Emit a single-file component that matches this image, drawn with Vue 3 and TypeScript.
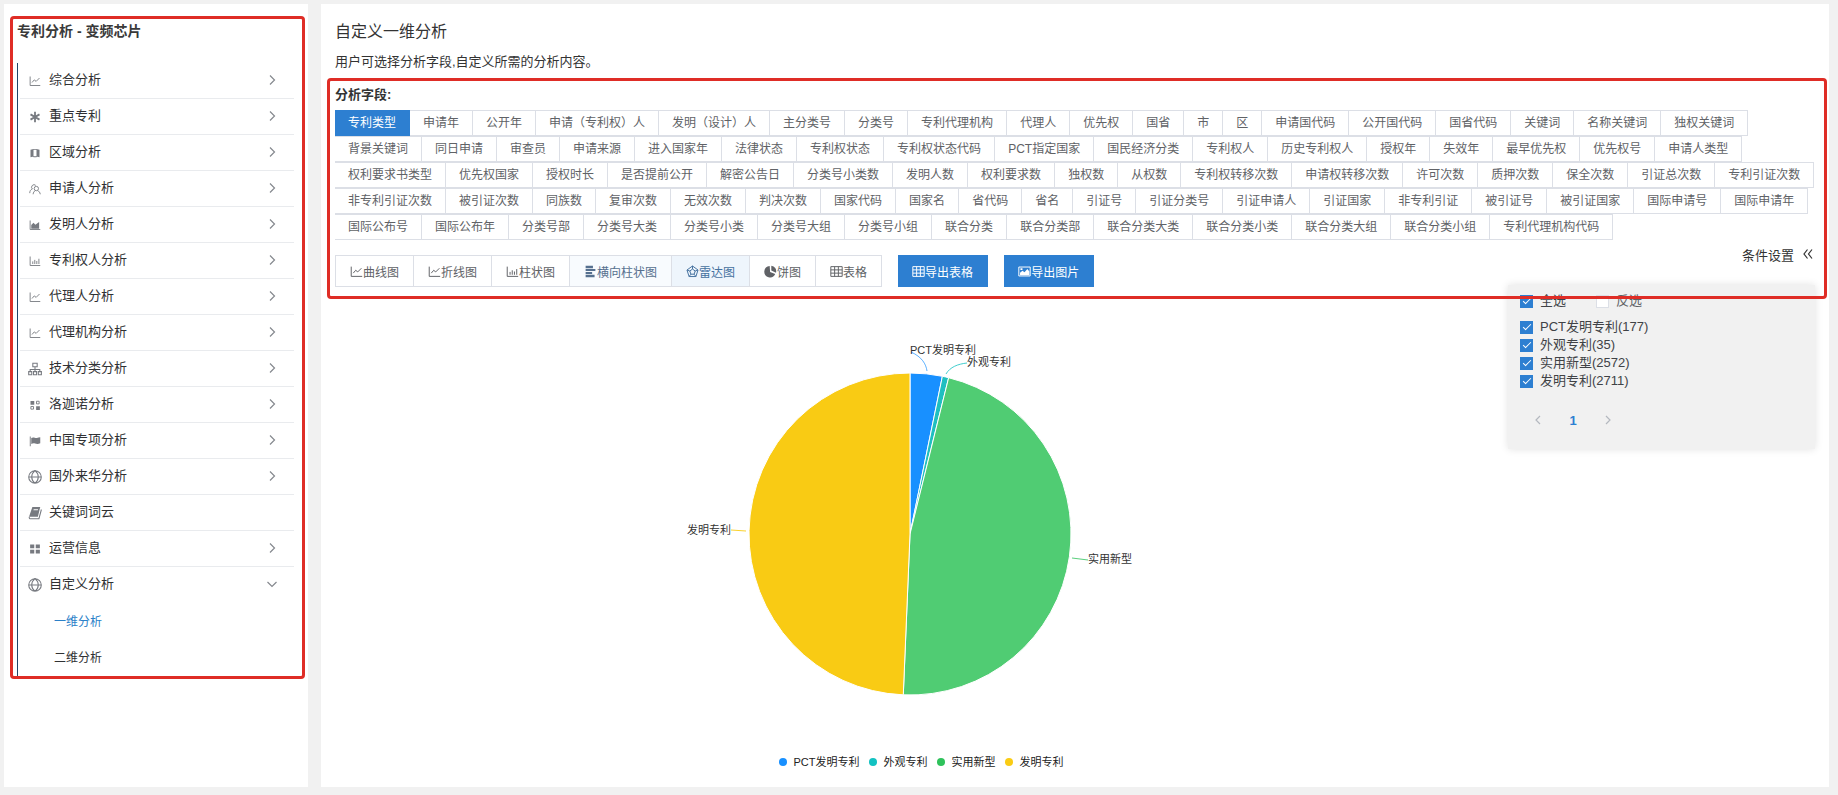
<script setup lang="ts">
import { computed, ref } from 'vue'

interface Glyph { line?: string; fill?: string }
interface MenuItem { label: string; icon: string; arrow: 'right' | 'down' | 'none' }
interface Slice { name: string; value: number; color: string; dot: string }

const glyphs: Record<string, Glyph> = {
  line: { line: 'M1.5 2v12H15M4 10l3-3.5 2.5 2L14 4' },
  star: { line: 'M8 1v14M2 4.5l12 7M14 4.5l-12 7' },
  map: { fill: 'M2 3.5l4-1v10l-4 1zM6 2.5h4v1.2H6zM6 12.300h4v1.2H6zM10 2.500l4 1v10l-4-1z' },
  people: { line: 'M4.500 8A3.200 3.200 0 1 1 9 3.200M1 13.500c0-3 1.200-4.600 3.500-5.500M9.800 4.500a2.900 2.900 0 1 1 0 5.800a2.900 2.900 0 1 1 0-5.800M5.500 15c.2-2.400 1.200-3.800 2.800-4.900M11.500 10.200c2 .8 3.200 2.400 3.500 4.800' },
  area: { line: 'M1.500 2v12H15', fill: 'M3 13V8l3-3 2.500 2.500L13.500 4v9z' },
  bars: { line: 'M1.500 2v12H15M5 12V8.500M7.700 12V6.500M10.400 12V8M13.200 12V5' },
  tree: { line: 'M5.500 1.500h5v4h-5zM8 5.500v3M2.500 11V8.500h11V11M8 8.500V11M.8 11h3.500v3.500H.8zM6.300 11h3.500v3.500H6.300zM11.800 11h3.500v3.500h-3.500z' },
  blocks: { line: 'M10 3h3.500v3.500H10zM2.500 10H6v3.500H2.500z', fill: 'M2 2.500h5v5H2zM9.500 9.500h5v5h-5z' },
  flag: { line: 'M1.700 2v13', fill: 'M3 4c3-2 5 .5 7.500 0 1.500-.2 3-.8 4.500-1v8c-3 1.500-5 1-7 .3-2-.7-3.500 0-5 .7z' },
  globe: { line: 'M8 .8a7.200 7.200 0 1 1 0 14.400a7.200 7.200 0 1 1 0-14.400M.8 8h14.400M8 .8c-5 4-5 10.400 0 14.400M8 .8c5 4 5 10.400 0 14.400' },
  book: { line: 'M1.500 12.500c-.5 1.500.5 2 1.500 2h9.500L15.300 4', fill: 'M5 1h9L11.300 12.300H1.200zM6.500 3.700l-.3 1.200h5l.3-1.200z' },
  grid: { fill: 'M1.500 2h5.500v5H1.500zM9 2h5.500v5H9zM1.500 9h5.500v5H1.500zM9 9h5.500v5H9z' },
  hbars: { fill: 'M2 1h9v3H2zM2 5h12v2.500H2zM2 8.500h8v2.500H2zM2 12h11v3H2z' },
  radar: { line: 'M8 1.200l6.800 5-2.600 8H3.800l-2.600-8zM8 5l3.300 2.400-1.300 3.900H6L4.700 7.400zM8 1.200V5M14.800 6.200l-3.500 1.200M12.200 14.200L10 11.300M3.800 14.200L6 11.300M1.200 6.200l3.500 1.200' },
  pie: { fill: 'M7 1.200A7 7 0 1 0 13.800 11L7.500 8.500zM9 .9v6l5.800 2.500A6.800 6.800 0 0 0 9 .9z' },
  table: { line: 'M1 2h14v12H1zM1 6h14M1 10h14M5.700 2v12M10.300 2v12' },
  image: { line: 'M1 2.500h14v11H1z', fill: 'M2.500 12.500V9.500l3-2.500 2.500 2 3.500-4 2.500 3v4.500zM3 4h2.500v2H3z' },
}
const bigIcons = ['globe', 'tree', 'book']

const menu: MenuItem[] = [
  { label: '综合分析', icon: 'line', arrow: 'right' },
  { label: '重点专利', icon: 'star', arrow: 'right' },
  { label: '区域分析', icon: 'map', arrow: 'right' },
  { label: '申请人分析', icon: 'people', arrow: 'right' },
  { label: '发明人分析', icon: 'area', arrow: 'right' },
  { label: '专利权人分析', icon: 'bars', arrow: 'right' },
  { label: '代理人分析', icon: 'line', arrow: 'right' },
  { label: '代理机构分析', icon: 'line', arrow: 'right' },
  { label: '技术分类分析', icon: 'tree', arrow: 'right' },
  { label: '洛迦诺分析', icon: 'blocks', arrow: 'right' },
  { label: '中国专项分析', icon: 'flag', arrow: 'right' },
  { label: '国外来华分析', icon: 'globe', arrow: 'right' },
  { label: '关键词词云', icon: 'book', arrow: 'none' },
  { label: '运营信息', icon: 'grid', arrow: 'right' },
  { label: '自定义分析', icon: 'globe', arrow: 'down' },
]
const subMenu = ['一维分析', '二维分析']

const fieldRows: string[][] = [
  '专利类型 申请年 公开年 申请（专利权）人 发明（设计）人 主分类号 分类号 专利代理机构 代理人 优先权 国省 市 区 申请国代码 公开国代码 国省代码 关键词 名称关键词 独权关键词',
  '背景关键词 同日申请 审查员 申请来源 进入国家年 法律状态 专利权状态 专利权状态代码 PCT指定国家 国民经济分类 专利权人 历史专利权人 授权年 失效年 最早优先权 优先权号 申请人类型',
  '权利要求书类型 优先权国家 授权时长 是否提前公开 解密公告日 分类号小类数 发明人数 权利要求数 独权数 从权数 专利权转移次数 申请权转移次数 许可次数 质押次数 保全次数 引证总次数 专利引证次数',
  '非专利引证次数 被引证次数 同族数 复审次数 无效次数 判决次数 国家代码 国家名 省代码 省名 引证号 引证分类号 引证申请人 引证国家 非专利引证 被引证号 被引证国家 国际申请号 国际申请年',
  '国际公布号 国际公布年 分类号部 分类号大类 分类号小类 分类号大组 分类号小组 联合分类 联合分类部 联合分类大类 联合分类小类 联合分类大组 联合分类小组 专利代理机构代码',
].map((row) => row.split(' '))
const activeField = ref('专利类型')

const chartTypes = [
  { label: '曲线图', icon: 'line' },
  { label: '折线图', icon: 'line' },
  { label: '柱状图', icon: 'bars' },
  { label: '横向柱状图', icon: 'hbars', tone: 'soft' },
  { label: '雷达图', icon: 'radar', tone: 'hover' },
  { label: '饼图', icon: 'pie' },
  { label: '表格', icon: 'table' },
]
const exportsList = [
  { label: '导出表格', icon: 'table' },
  { label: '导出图片', icon: 'image' },
]

const slices: Slice[] = [
  { name: 'PCT发明专利', value: 177, color: '#1890ff', dot: '#1890ff' },
  { name: '外观专利', value: 35, color: '#1fbfc0', dot: '#13c2c2' },
  { name: '实用新型', value: 2572, color: '#50cc73', dot: '#2fc25b' },
  { name: '发明专利', value: 2711, color: '#f9cb14', dot: '#facc14' },
]
const checked = ref(slices.map((s) => s.name))

const arcs = computed(() => {
  const total = slices.reduce((sum, s) => sum + s.value, 0)
  const point = (a: number) => `${250 + 161 * Math.sin(a)} ${214 - 161 * Math.cos(a)}`
  let angle = 0
  return slices.map((s) => {
    const from = angle
    angle += (s.value / total) * Math.PI * 2
    const large = angle - from > Math.PI ? 1 : 0
    return { color: s.color, d: `M250 214L${point(from)}A161 161 0 ${large} 1 ${point(angle)}Z` }
  })
})
</script>

<template>
  <div class="page">
    <aside class="panel sidebar">
      <div class="marked">
        <h2 class="side-title">专利分析 - 变频芯片</h2>
        <nav class="menu">
          <a v-for="item in menu" :key="item.label" href="#" class="menu-item">
            <svg class="icon" viewBox="0 0 16 16" :class="{ big: bigIcons.includes(item.icon) }">
              <path v-if="glyphs[item.icon].line" class="ln" :class="{ heavy: item.icon === 'star' }" :d="glyphs[item.icon].line" />
              <path v-if="glyphs[item.icon].fill" class="fl" :d="glyphs[item.icon].fill" />
            </svg>
            <span class="menu-label">{{ item.label }}</span>
            <svg v-if="item.arrow !== 'none'" class="chevron" viewBox="0 0 10 10">
              <path class="ln" :d="item.arrow === 'right' ? 'M3 .5L7.500 5 3 9.500' : 'M.5 3L5 7.500 9.500 3'" />
            </svg>
          </a>
          <div class="sub-menu">
            <a v-for="(sub, i) in subMenu" :key="sub" href="#" class="sub-item" :class="{ current: i === 0 }">{{ sub }}</a>
          </div>
        </nav>
      </div>
    </aside>

    <main class="panel content">
      <h1 class="title">自定义一维分析</h1>
      <p class="desc">用户可选择分析字段,自定义所需的分析内容。</p>
      <section class="filters">
        <h3 class="caption">分析字段:</h3>
        <div v-for="(row, r) in fieldRows" :key="r" class="field-row">
          <button
            v-for="field in row"
            :key="field"
            type="button"
            class="field"
            :class="{ active: field === activeField }"
            @click="activeField = field"
          >{{ field }}</button>
        </div>
        <div class="toolbar">
          <div class="types">
            <button v-for="t in chartTypes" :key="t.label" type="button" class="type" :class="t.tone">
              <svg class="icon" viewBox="0 0 16 16">
                <path v-if="glyphs[t.icon].line" class="ln" :d="glyphs[t.icon].line" />
                <path v-if="glyphs[t.icon].fill" class="fl" :d="glyphs[t.icon].fill" />
              </svg>{{ t.label }}
            </button>
          </div>
          <button v-for="e in exportsList" :key="e.label" type="button" class="export">
            <svg class="icon" viewBox="0 0 16 16">
              <path v-if="glyphs[e.icon].line" class="ln" :d="glyphs[e.icon].line" />
              <path v-if="glyphs[e.icon].fill" class="fl" :d="glyphs[e.icon].fill" />
            </svg>{{ e.label }}
          </button>
          <button type="button" class="settings">
            条件设置
            <svg class="double" viewBox="0 0 10 10"><path class="ln" d="M4.500 .5L1 5l3.500 4.500M9 .5L5.500 5 9 9.500" /></svg>
          </button>
          <div class="popup">
            <div class="check-head">
              <label class="check"><input type="checkbox" checked />全选</label>
              <label class="check invert"><input type="checkbox" />反选</label>
            </div>
            <label v-for="s in slices" :key="s.name" class="check item">
              <input v-model="checked" type="checkbox" :value="s.name" />{{ s.name }}({{ s.value }})
            </label>
            <div class="pager">
              <button type="button" aria-label="上一页" disabled>
                <svg viewBox="0 0 10 10"><path class="ln" d="M7 1L3 5l4 4" /></svg>
              </button>
              <button type="button" class="num">1</button>
              <button type="button" aria-label="下一页" disabled>
                <svg viewBox="0 0 10 10"><path class="ln" d="M3 1l4 4-4 4" /></svg>
              </button>
            </div>
          </div>
        </div>
      </section>

      <figure class="chart">
        <svg class="pie" viewBox="0 0 500 400" width="500" height="400">
          <path v-for="a in arcs" :key="a.color" class="slice" :d="a.d" :fill="a.color" />
          <g fill="none">
            <path d="M251 32C262 37 266 44 267 51" stroke="#1890ff" stroke-opacity=".7" />
            <path d="M286 54C290 47 298 44 307 43" stroke="#13c2c2" stroke-opacity=".8" />
            <path d="M412 238L428 240" stroke="#2fc25b" stroke-opacity=".8" />
            <path d="M71 210L86 211" stroke="#facc14" stroke-opacity=".9" />
          </g>
          <text x="250" y="34">PCT发明专利</text>
          <text x="307" y="46">外观专利</text>
          <text x="428" y="243">实用新型</text>
          <text x="71" y="214" text-anchor="end">发明专利</text>
        </svg>
        <figcaption class="legend">
          <span v-for="s in slices" :key="s.name" class="legend-item">
            <svg class="dot" viewBox="0 0 8 8"><circle cx="4" cy="4" r="4" :fill="s.dot" /></svg>{{ s.name }}
          </span>
        </figcaption>
      </figure>
    </main>
  </div>
</template>

<style>
body { margin: 0; background: #f1f1f1; }
</style>

<style scoped>
* { box-sizing: border-box; }
.page {
  display: flex;
  gap: 13px;
  min-height: 100vh;
  padding: 4px 9px 8px 4px;
  background: #f1f1f1;
  color: #333;
  font-family: "Liberation Sans", "Noto Sans CJK SC", sans-serif;
  font-size: 13px;
}
h1, h2, h3, p, figure { margin: 0; }
button { font: inherit; cursor: pointer; border-radius: 0; margin: 0; }
.panel { background: #fff; }
.ln { fill: none; stroke: currentColor; stroke-width: 1.2; }
.heavy { stroke-width: 2.4; }
.fl { fill: currentColor; fill-rule: evenodd; }
.icon { width: 13px; height: 13px; flex: none; }

.sidebar { flex: none; width: 304px; padding: 12px 3px 12px 6px; }
.marked { border: 3px solid #df2d26; border-radius: 4px; padding: 0 8px 0 4px; }
.side-title { font-size: 14px; line-height: 24px; padding-bottom: 20px; color: #3a3a3a; }
.menu { border-left: 1px solid #1f4568; }
.menu-item {
  display: flex;
  align-items: center;
  height: 36px;
  margin-left: 2px;
  padding: 0 17px 2px 9px;
  border-bottom: 1px solid #e9ebee;
  color: #303133;
  text-decoration: none;
}
.menu-item .icon { width: 12px; height: 12px; margin: 2px 8px 0 0; color: #777a80; }
.menu-item .icon.big { width: 14px; height: 14px; margin: 2px 7px 0 -1px; }
.menu-label { flex: 1; padding-bottom: 2px; }
.chevron { width: 10px; height: 10px; color: #85888e; }
.menu-item:nth-of-type(15) { border-bottom-color: transparent; }
.sub-menu { padding-top: 1px; }
.sub-item {
  display: block;
  padding-left: 36px;
  font-size: 12px;
  line-height: 36px;
  color: #303133;
  text-decoration: none;
}
.sub-item.current { color: #2a80c8; }

.content { position: relative; z-index: 0; flex: 1; min-width: 0; padding: 12px 2px 0 6px; }
.title { padding-left: 8px; font-size: 16px; line-height: 32px; font-weight: 400; }
.desc { padding-left: 8px; line-height: 28px; margin-bottom: 2px; }
.filters { position: relative; border: 3px solid #df2d26; border-radius: 4px; padding: 0 4px 9px 5px; }
.caption { font-size: 13px; line-height: 27px; padding-bottom: 2px; }
.field-row { display: flex; }
.field {
  height: 26px;
  padding: 0 13px;
  border: 1px solid #dcdfe6;
  border-left: 0;
  background: #fff;
  color: #606266;
  font-size: 12px;
  line-height: 24px;
  white-space: nowrap;
}
.field.active { background: #2d7fd1; border-color: #2d7fd1; color: #fff; }
.toolbar { position: relative; display: flex; align-items: flex-start; padding-right: 7px; }
.types { display: flex; margin-top: 15px; border-left: 1px solid #dcdfe6; }
.type, .export {
  display: flex;
  align-items: center;
  height: 32px;
  padding: 0 14px;
  border: 1px solid #dcdfe6;
  border-left: 0;
  background: #fff;
  color: #606266;
  font-size: 12px;
  white-space: nowrap;
}
.type.soft { background: #f8fbfe; color: #56708f; }
.type.hover { background: #eef5fc; color: #45719f; }
.export { margin: 15px 0 0 16px; background: #2d7fd1; border-color: #2d7fd1; color: #fff; }
.settings {
  display: flex;
  align-items: center;
  gap: 9px;
  height: 28px;
  margin-left: auto;
  padding: 0;
  border: 0;
  background: none;
  color: #333;
}
.double { width: 10px; height: 10px; }
.popup {
  position: absolute;
  z-index: -1;
  top: 45px;
  right: 5px;
  width: 307px;
  height: 164px;
  padding: 7px 12px;
  background: #f1f1f1;
  box-shadow: 0 0 8px rgba(0, 0, 0, 0.12);
}
.check-head { display: flex; gap: 30px; margin-bottom: 8px; }
.check { display: flex; align-items: center; gap: 7px; line-height: 18px; color: #404246; }
.invert { color: #606266; }
.check input {
  appearance: none;
  width: 13px;
  height: 13px;
  margin: 0;
  border: 1px solid #dcdfe6;
  background: #fff;
  display: grid;
  place-items: center;
}
.check input:checked { background: #2d7fd1; border-color: #2d7fd1; }
.check input:checked::after {
  content: "";
  width: 7px;
  height: 3px;
  border: solid #fff;
  border-width: 0 0 1px 1px;
  transform: translateY(-1px) rotate(-45deg);
}
.pager { display: flex; gap: 15px; padding: 18px 0 0 8px; }
.pager button {
  display: grid;
  place-items: center;
  width: 20px;
  height: 24px;
  padding: 0;
  border: 0;
  background: none;
  color: #b4b8bf;
}
.pager svg { width: 10px; height: 10px; }
.pager .num { color: #2d7fd1; font-weight: 700; }

.chart { display: flex; flex-direction: column; align-items: center; padding: 21px 334px 16px 0; }
.pie { display: block; overflow: visible; }
.slice { stroke: #fff; stroke-width: 1; }
.pie text { font-size: 11px; fill: #333; }
.legend { display: flex; gap: 9px; margin: 33px 0 0 22px; font-size: 11px; line-height: 18px; color: #222; }
.legend-item { display: flex; align-items: center; gap: 7px; }
.dot { width: 8px; height: 8px; }
</style>
